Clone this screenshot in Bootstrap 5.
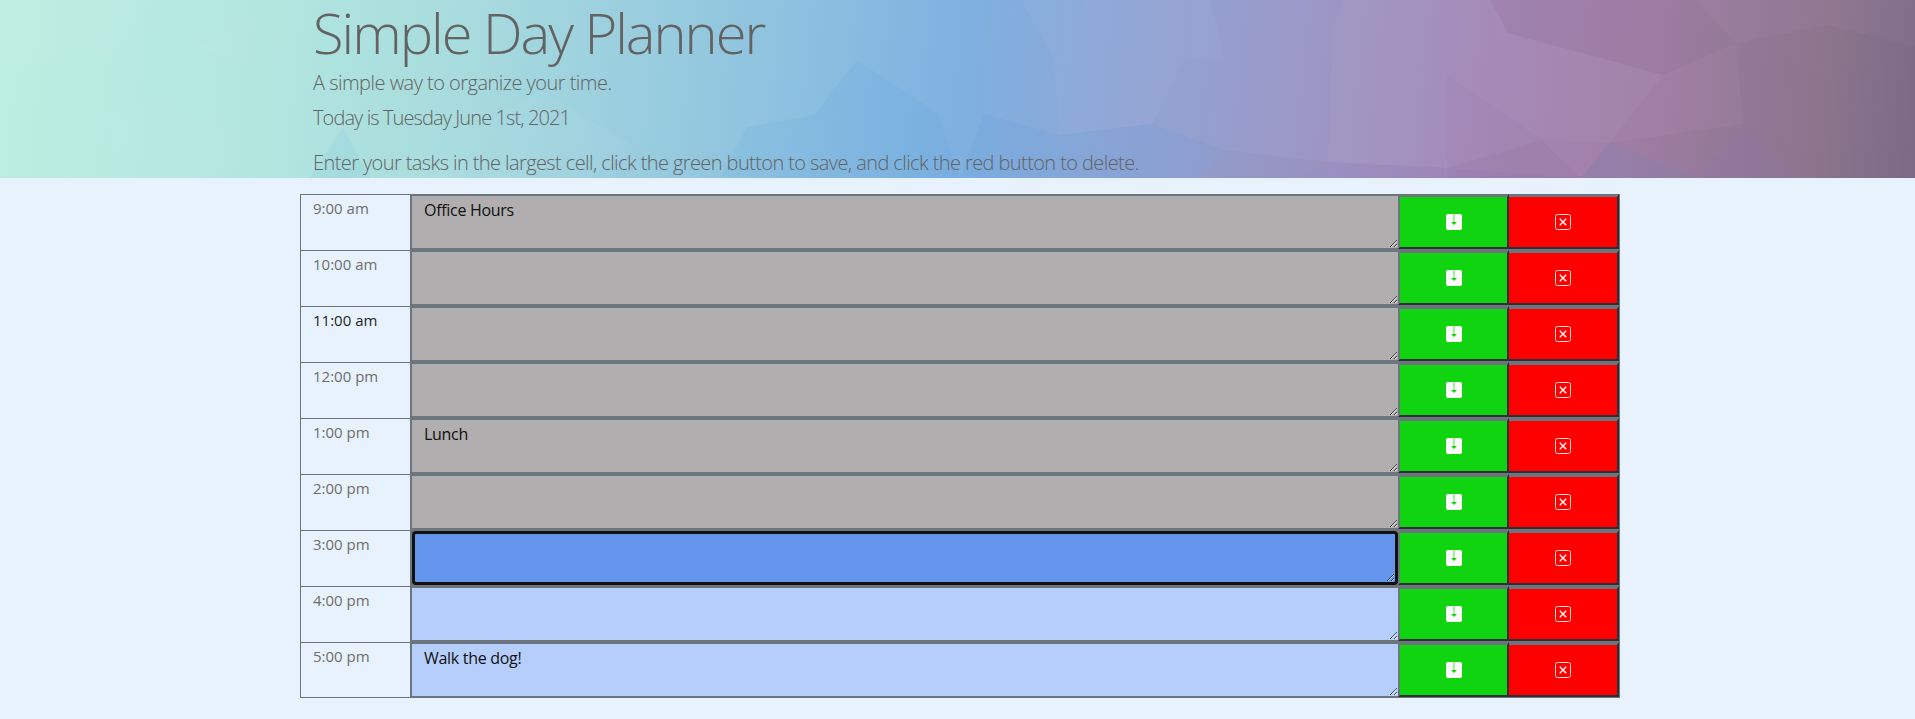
<!DOCTYPE html>
<html lang="en">
<head>
    <meta charset="UTF-8">
    <meta name="viewport" content="width=device-width, initial-scale=1.0">
    <title>Simple Day Planner</title>
    <link href="https://cdn.jsdelivr.net/npm/bootstrap@5.3.3/dist/css/bootstrap.min.css" rel="stylesheet">
    <style>
        body { background: #e8f2fd; font-family: "Open Sans", "Noto Sans", sans-serif; color: #212529; }
        .hero { height: 178px; overflow: hidden; background: linear-gradient(96deg, #bdeee1 0%, #b2e6df 14%, #a8dcde 24%, #8fc3df 40%, #7eb1e0 50%, #8ea6d6 58%, #9c98c6 68%, #a486b4 78%, #a07fa5 86%, #8f7890 95%, #7f6c8b 100%); }
        .hero-art { top: 0; left: 0; }
        .hero-text { margin-left: 313px; padding-top: 2px; color: #636363; font-weight: 300; }
        .hero-title { font-weight: 300; font-size: 56px; line-height: 61px; margin: 0 0 5px; letter-spacing: -2px; }
        .hero-line { font-size: 20px; line-height: 30px; margin: 0 0 5px; letter-spacing: -.52px; white-space: nowrap; }
        .hero-line.date-line { letter-spacing: -.9px; }
        .hero-line.gap-top { margin-top: 15px; margin-bottom: 0; letter-spacing: -.59px; }
        .planner { width: 1320px; margin: 16px 0 0 300px; border-right: 1px solid #6c757d; }
        .slot { height: 56px; background: #6c757d; }
        .slot-time { width: 112px; flex: none; background: #e8f2fd; border: 1px solid #6c757d; border-bottom: 0; border-right-width: 2px; padding: 2px 12px; font-size: 15px; line-height: 22px; color: #6e6e6e; }
        .slot:last-child .slot-time { border-bottom: 1px solid #6c757d; }
        .slot-time.now-text { color: #212529; }
        .slot-box { flex: 1; display: block; height: 52px; margin: 2px 0; padding: 3px 12px; border: 0; font-family: inherit; font-size: 16px; letter-spacing: -.3px; line-height: 22px; color: #111; border-radius: 0; outline: 0; }
        .slot-box.is-past { background: #b0aeae; }
        .slot-box.is-now { background: #6495ed; height: 54px; margin: 1px 0; border: 3px solid #111; border-radius: 4px; }
        .slot-box.is-next { background: #b6cefb; }
        .act { flex: none; height: 55px; border-style: solid; border-color: #6c757d #2c2f33 #2c2f33 #6c757d; border-width: 3px 2px 2px 2px; border-radius: 0; padding: 0; display: flex; align-items: center; justify-content: center; }
        .act-save { width: 111px; background: #10d410; }
        .act-del { width: 110px; background: #ff0000; border-left-width: 0; }
    </style>
</head>
<body>
    <svg class="d-none">
        <symbol id="ico-save" viewBox="0 0 16 16">
            <rect width="16" height="16" rx="2" fill="#fff"/>
            <path d="M8 0v8.5" stroke="#10d410" stroke-opacity=".8"/>
            <path d="M5 8h6l-3 3z" fill="#10d410"/>
        </symbol>
        <symbol id="ico-del" viewBox="0 0 16 16">
            <rect x=".5" y=".5" width="15" height="15" rx="2" fill="none" stroke="#ffdcdc"/>
            <path d="M4.8 4.8l6.4 6.4M11.2 4.8l-6.4 6.4" stroke="#fff" stroke-width="1.4"/>
        </symbol>
    </svg>

    <!-- Header -->
    <div class="hero position-relative">
        <svg class="hero-art position-absolute" width="1915" height="178" viewBox="0 0 1915 178">
            <g fill="#fff" fill-opacity=".03">
                <polygon points="0,0 147,0 116,55 12,68"/>
                <polygon points="275,0 282,70 196,48"/>
                <polygon points="101,120 153,105 251,138 230,178 130,178"/>
                <polygon points="453,143 540,90 637,148 590,178 430,178"/>
                <polygon points="1021,0 1054,59 1185,59 1225,60 1210,0"/>
                <polygon points="1054,59 1185,59 1152,124 1059,135"/>
                <polygon points="1333,28 1447,75 1447,168 1328,162"/>
                <polygon points="1490,0 1508,33 1447,75 1333,28 1344,0"/>
                <polygon points="1508,33 1663,75 1609,143 1542,140 1447,75"/>
            </g>
            <g fill="#000" fill-opacity=".022">
                <polygon points="1508,33 1490,0 1695,0 1736,43 1663,75"/>
                <polygon points="1736,43 1828,25 1852,155 1743,124"/>
                <polygon points="1609,143 1743,124 1700,178 1581,178"/>
                <polygon points="1743,124 1852,155 1867,178 1700,178"/>
                <polygon points="1828,25 1915,47 1915,178 1867,178 1852,155"/>
                <polygon points="1225,150 1328,162 1300,178 1200,178"/>
                <polygon points="1447,168 1542,140 1581,178 1447,178"/>
            </g>
            <g fill="#3f8fe6" fill-opacity=".07">
                <polygon points="984,114 1059,135 1040,178 960,178"/>
                <polygon points="857,60 937,113 814,115"/>
                <polygon points="747,127 814,115 937,113 960,178 720,178"/>
                <polygon points="1225,150 1152,124 1059,135 1040,178 1200,178"/>
                <polygon points="1581,178 1609,143 1700,178"/>
                <polygon points="343,127 310,178 370,178"/>
            </g>
            <g fill="#8a6fb5" fill-opacity=".14">
                <polygon points="1447,168 1581,178 1447,178"/>
                <polygon points="1328,162 1300,178 1447,178 1447,168"/>
                <polygon points="1743,124 1700,178 1800,178"/>
            </g>
        </svg>
        <div class="hero-text position-relative">
            <h1 class="hero-title">Simple Day Planner</h1>
            <p class="hero-line">A simple way to organize your time.</p>
            <p class="hero-line date-line">Today is Tuesday June 1st, 2021</p>
            <p class="hero-line gap-top">Enter your tasks in the largest cell, click the green button to save, and click the red button to delete.</p>
        </div>
    </div>

    <!-- Planner rows -->
    <div class="planner">
        <div class="slot d-flex">
            <div class="slot-time">9:00 am</div>
            <textarea class="slot-box is-past">Office Hours</textarea>
            <button class="act act-save"><svg width="16" height="16"><use href="#ico-save"/></svg></button>
            <button class="act act-del"><svg width="16" height="16"><use href="#ico-del"/></svg></button>
        </div>
        <div class="slot d-flex">
            <div class="slot-time">10:00 am</div>
            <textarea class="slot-box is-past"></textarea>
            <button class="act act-save"><svg width="16" height="16"><use href="#ico-save"/></svg></button>
            <button class="act act-del"><svg width="16" height="16"><use href="#ico-del"/></svg></button>
        </div>
        <div class="slot d-flex">
            <div class="slot-time now-text">11:00 am</div>
            <textarea class="slot-box is-past"></textarea>
            <button class="act act-save"><svg width="16" height="16"><use href="#ico-save"/></svg></button>
            <button class="act act-del"><svg width="16" height="16"><use href="#ico-del"/></svg></button>
        </div>
        <div class="slot d-flex">
            <div class="slot-time">12:00 pm</div>
            <textarea class="slot-box is-past"></textarea>
            <button class="act act-save"><svg width="16" height="16"><use href="#ico-save"/></svg></button>
            <button class="act act-del"><svg width="16" height="16"><use href="#ico-del"/></svg></button>
        </div>
        <div class="slot d-flex">
            <div class="slot-time">1:00 pm</div>
            <textarea class="slot-box is-past">Lunch</textarea>
            <button class="act act-save"><svg width="16" height="16"><use href="#ico-save"/></svg></button>
            <button class="act act-del"><svg width="16" height="16"><use href="#ico-del"/></svg></button>
        </div>
        <div class="slot d-flex">
            <div class="slot-time">2:00 pm</div>
            <textarea class="slot-box is-past"></textarea>
            <button class="act act-save"><svg width="16" height="16"><use href="#ico-save"/></svg></button>
            <button class="act act-del"><svg width="16" height="16"><use href="#ico-del"/></svg></button>
        </div>
        <div class="slot d-flex">
            <div class="slot-time">3:00 pm</div>
            <textarea class="slot-box is-now"></textarea>
            <button class="act act-save"><svg width="16" height="16"><use href="#ico-save"/></svg></button>
            <button class="act act-del"><svg width="16" height="16"><use href="#ico-del"/></svg></button>
        </div>
        <div class="slot d-flex">
            <div class="slot-time">4:00 pm</div>
            <textarea class="slot-box is-next"></textarea>
            <button class="act act-save"><svg width="16" height="16"><use href="#ico-save"/></svg></button>
            <button class="act act-del"><svg width="16" height="16"><use href="#ico-del"/></svg></button>
        </div>
        <div class="slot d-flex">
            <div class="slot-time">5:00 pm</div>
            <textarea class="slot-box is-next">Walk the dog!</textarea>
            <button class="act act-save"><svg width="16" height="16"><use href="#ico-save"/></svg></button>
            <button class="act act-del"><svg width="16" height="16"><use href="#ico-del"/></svg></button>
        </div>
    </div>

    <script src="https://cdn.jsdelivr.net/npm/bootstrap@5.3.3/dist/js/bootstrap.bundle.min.js"></script>
</body>
</html>
